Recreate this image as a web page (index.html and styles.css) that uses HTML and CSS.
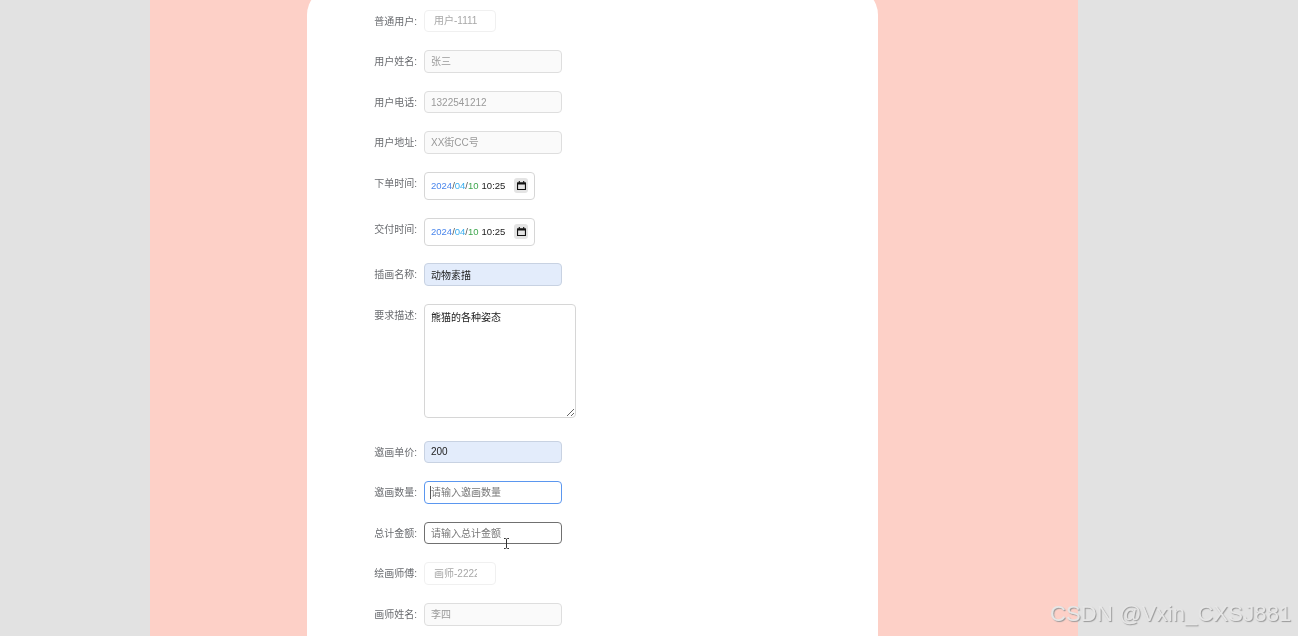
FILE: index.html
```html
<!DOCTYPE html>
<html lang="zh">
<head>
<meta charset="utf-8">
<title>订单</title>
<link rel="stylesheet" href="styles.css">
</head>
<body>
<main class="page">
  <section class="card">
    <form class="form">
      <div class="row"><label class="label">普通用户:</label><input class="input short muted-light" placeholder="用户-1111" readonly></div>
      <div class="row"><label class="label">用户姓名:</label><input class="input disabled" placeholder="张三" readonly></div>
      <div class="row"><label class="label">用户电话:</label><input class="input disabled" placeholder="1322541212" readonly></div>
      <div class="row"><label class="label">用户地址:</label><input class="input disabled" placeholder="XX街CC号" readonly></div>
      <div class="row"><label class="label">下单时间:</label>
        <div class="date"><span class="y">2024</span><span class="s">/</span><span class="m">04</span><span class="s">/</span><span class="d">10</span><span class="t">10:25</span>
          <span class="cal"><svg viewBox="0 0 10 10" width="11" height="11"><path d="M1.5 2h7a.6.6 0 0 1 .6.6v6a.6.6 0 0 1-.6.6h-7a.6.6 0 0 1-.6-.6v-6a.6.6 0 0 1 .6-.6z M1.9 4.2v4h6.2v-4z" fill="#111" fill-rule="evenodd"/><path d="M3 1v1.5M7 1v1.5" stroke="#111" stroke-width="1"/></svg></span>
        </div>
      </div>
      <div class="row row-tight"><label class="label">交付时间:</label>
        <div class="date"><span class="y">2024</span><span class="s">/</span><span class="m">04</span><span class="s">/</span><span class="d">10</span><span class="t">10:25</span>
          <span class="cal"><svg viewBox="0 0 10 10" width="11" height="11"><path d="M1.5 2h7a.6.6 0 0 1 .6.6v6a.6.6 0 0 1-.6.6h-7a.6.6 0 0 1-.6-.6v-6a.6.6 0 0 1 .6-.6z M1.9 4.2v4h6.2v-4z" fill="#111" fill-rule="evenodd"/><path d="M3 1v1.5M7 1v1.5" stroke="#111" stroke-width="1"/></svg></span>
        </div>
      </div>
      <div class="row"><label class="label">插画名称:</label><input class="input filled" value="动物素描" readonly></div>
      <div class="row row-area"><label class="label">要求描述:</label><textarea class="area" readonly>熊猫的各种姿态</textarea></div>
      <div class="row"><label class="label">邀画单价:</label><input class="input filled" value="200" readonly></div>
      <div class="row"><label class="label">邀画数量:</label><div class="field"><input class="input focused" placeholder="请输入邀画数量" readonly><i class="caret"></i></div></div>
      <div class="row"><label class="label">总计金额:</label><div class="field"><input class="input hovered" placeholder="请输入总计金额" readonly>
        <svg class="ibeam" viewBox="0 0 7 11" width="7" height="11"><path d="M1 .5h1.5L3.5 1.2 4.500 .5H6M3.500 1.200v8.600M1 10.500h1.500l1-.7 1 .7H6" fill="none" stroke="#333" stroke-width="1"/></svg></div></div>
      <div class="row"><label class="label">绘画师傅:</label><input class="input short muted-light" placeholder="画师-2222" readonly></div>
      <div class="row"><label class="label">画师姓名:</label><input class="input disabled" placeholder="李四" readonly></div>
    </form>
  </section>
</main>
<div class="watermark">CSDN @Vxin_CXSJ881</div>
</body>
</html>
```
FILE: styles.css
```css
* { box-sizing: border-box; }
html, body { margin: 0; height: 636px; overflow: hidden; }
body { background: #e2e2e2; font-family: "Liberation Sans", "Noto Sans CJK SC", sans-serif; font-size: 10px; position: relative; }
.page { margin-left: 150px; width: 928px; height: 636px; background: #fdd0c7; padding-left: 157px; overflow: hidden; }
.card { width: 571px; height: 700px; margin-top: -13px; background: #fff; border-radius: 28px; padding: 22.600px 0 0 0; }
.form { display: flex; flex-direction: column; filter: blur(0.35px); }
.row { display: flex; align-items: flex-start; margin-bottom: 18px; }
.row-tight { margin-bottom: 17px; }
.row-area { margin-bottom: 23px; }
.label { width: 117px; height: 22.600px; padding-right: 7px; text-align: right; color: #6a6c70; line-height: 23.600px; font-size: 10px; flex: none; }
.field { position: relative; display: flex; }
.input { display: block; width: 138px; height: 22.600px; padding: 0 6px; border-radius: 4px; border: 1px solid #dcdfe6; font: inherit; font-size: 10px; color: #222; background: #fff; outline: none; }
.input::placeholder { color: #9a9a9a; opacity: 1; }
.short { width: 72px; padding-left: 9px; padding-right: 18px; }
.muted-light { border-color: #f0f0f0; background: #fff; }
.muted-light::placeholder { color: #a8a8a8; }
.disabled { background: #fafafa; border-color: #dedede; }
.filled { background: #e3ecfb; border-color: #c8d2e2; color: #222; }
.focused { border-color: #5b97ef; }
.focused::placeholder, .hovered::placeholder { color: #777; }
.hovered { border-color: #707070; }
.caret { position: absolute; left: 6px; top: 5px; width: 1px; height: 13px; background: #555; }
.ibeam { position: absolute; left: 79px; top: 16.500px; }
.date { display: flex; align-items: center; width: 111px; height: 28px; padding: 0 6px; border: 1px solid #d6d6d6; border-radius: 4px; background: #fff; color: #222; font-size: 9.500px; }
.y { color: #4a86ec; }
.m { color: #38aef0; }
.d { color: #3fa74f; }
.s { color: #555; }
.t { margin-left: 3px; color: #222; }
.cal { margin-left: auto; width: 14px; height: 15px; display: flex; align-items: center; justify-content: center; background: #e4e4e4; border-radius: 3px; }
.area { display: block; width: 152px; height: 114px; padding: 4px 6px; border: 1px solid #d6d6d6; border-radius: 4px; font: inherit; font-size: 10px; color: #222; background: #fff; outline: none; resize: vertical; }
.watermark { position: absolute; left: 1050px; top: 601px; font-size: 22px; line-height: 26px; letter-spacing: 0.150px; white-space: nowrap; color: #e6e6e6; text-shadow: 1px 1px 1px #999; filter: blur(0.3px); }
```
